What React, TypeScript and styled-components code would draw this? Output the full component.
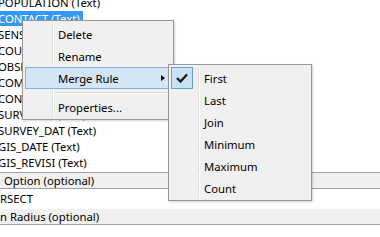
import React from 'react';
import { styled, createGlobalStyle } from 'styled-components';

const GlobalStyle = createGlobalStyle`
body {
  margin: 0;
  background: #ffffff;
  font-family: "Noto Sans", "Open Sans", sans-serif;
  font-size: 11.3px;
  color: #000000;
}
`;

const Page = styled.div`
position: relative;
width: 380px;
height: 237px;
overflow: hidden;
background: #ffffff;
`;

const FieldList = styled.div`
margin-top: -5px;
padding-bottom: 1px;
border-bottom: 1px solid #a0a0a0;
display: flex;
flex-direction: column;
`;

const FieldRow = styled.div`
height: 16px;
line-height: 16px;
white-space: nowrap;
`;

const FieldText = styled.span<{ $selected?: boolean }>`
display: inline-block;
margin-left: -3px;
padding: 0 3px 0 1px;
height: 15px;
line-height: 15px;
background: ${p => (p.$selected ? '#3399ff' : 'transparent')};
color: ${p => (p.$selected ? '#ffffff' : '#000000')};
`;

const LabelRow = styled.div<{ $indent?: number }>`
height: 15px;
line-height: 15px;
background: #f0f0f0;
border-bottom: 1px solid #a0a0a0;
padding-left: ${p => p.$indent ?? 0}px;
white-space: nowrap;
`;

const InputRow = styled.div`
height: 20px;
line-height: 20px;
background: #ffffff;
white-space: nowrap;
`;

const Menu = styled.div<{ $left: number; $top: number; $width: number }>`
position: absolute;
left: ${p => p.$left}px;
top: ${p => p.$top}px;
width: ${p => p.$width}px;
box-sizing: border-box;
background: #f0f0f0;
border: 1px solid #979797;
padding: 2px 2px 1px 2px;
box-shadow: 1px 1px 2px rgba(0, 0, 0, 0.18);
display: flex;
flex-direction: column;
`;

const Gutter = styled.div`
position: absolute;
top: 2px;
bottom: 1px;
left: 29px;
width: 1px;
background: #e2e2e2;
border-right: 1px solid #ffffff;
`;

const Item = styled.div<{ $hot?: boolean }>`
position: relative;
height: 22px;
box-sizing: border-box;
display: flex;
align-items: center;
padding-left: 32px;
border: 1px solid ${p => (p.$hot ? '#80b4e6' : 'transparent')};
background: ${p => (p.$hot ? '#d4e5f5' : 'transparent')};
white-space: nowrap;
`;

const Separator = styled.div`
height: 7px;
display: flex;
align-items: center;
padding-left: 30px;
&::after {
  content: "";
  flex: 1;
  height: 1px;
  background: #d7d7d7;
  border-bottom: 1px solid #ffffff;
}
`;

const Arrow = styled.span`
position: absolute;
right: 5px;
top: 7px;
width: 0;
height: 0;
border-top: 3.5px solid transparent;
border-bottom: 3.5px solid transparent;
border-left: 4px solid #000000;
`;

const CheckBox = styled.div`
position: absolute;
left: -1px;
top: -1px;
width: 22px;
height: 22px;
box-sizing: border-box;
background: #c8e0f6;
border: 1px solid #62a2dc;
display: flex;
align-items: center;
justify-content: center;
`;

const fields = [
  'POPULATION (Text)',
  'CONTACT (Text)',
  'SENSOR_ID (Text)',
  'COUNTY (Text)',
  'OBSERVER (Text)',
  'COMMENTS (Text)',
  'CONTROL (Text)',
  'SURVEYOR (Text)',
  'SURVEY_DAT (Text)',
  'GIS_DATE (Text)',
  'GIS_REVISI (Text)',
];

const rules = ['First', 'Last', 'Join', 'Minimum', 'Maximum', 'Count'];

export default function App() {
  return (
    <Page>
      <GlobalStyle />
      <FieldList>
        {fields.map(f => (
          <FieldRow key={f}>
            <FieldText $selected={f === 'CONTACT (Text)'}>{f}</FieldText>
          </FieldRow>
        ))}
      </FieldList>
      <LabelRow $indent={4}>Option (optional)</LabelRow>
      <InputRow>RSECT</InputRow>
      <LabelRow>n Radius (optional)</LabelRow>

      <Menu $left={22} $top={20} $width={152}>
        <Gutter />
        <Item>Delete</Item>
        <Item>Rename</Item>
        <Item $hot>
          Merge Rule
          <Arrow />
        </Item>
        <Separator />
        <Item>Properties...</Item>
      </Menu>

      <Menu $left={168} $top={64} $width={144}>
        <Gutter />
        {rules.map(r => (
          <Item key={r}>
            {r === 'First' ? (
              <CheckBox>
                <svg width="12" height="10" viewBox="0 0 12 10">
                  <path d="M1 5 L4.5 8.5 L11 1.5" fill="none" stroke="#1a1a1a" strokeWidth="2.4" />
                </svg>
              </CheckBox>
            ) : null}
            {r}
          </Item>
        ))}
      </Menu>
    </Page>
  );
}
